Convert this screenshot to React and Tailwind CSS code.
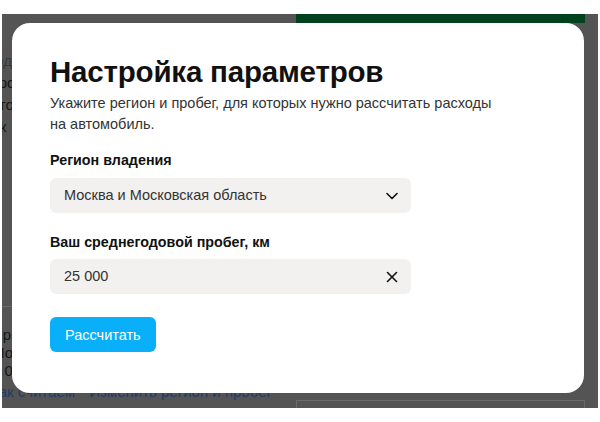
import React from "react";

export default function App() {
  return (
    <div className="relative w-[600px] h-[422px] bg-white overflow-hidden font-['Liberation_Sans',Arial,sans-serif]">
      {/* underlying page (dimmed) */}
      <div className="pt-[14px] pl-[2px] pr-[2px]">
        <div className="relative h-[394px] bg-[#545454] overflow-hidden flex">
          <div className="w-[294px] shrink-0 relative">
            <div className="absolute left-[-14px] top-[36px] text-[15px] leading-[22px] text-[#161616]">
              <div className="text-[#3a3a3a]">Год</div>
              <div>Про</div>
              <div>Ито</div>
              <div>Ок</div>
            </div>
            <div className="absolute left-0 right-0 top-[292px] h-px bg-[#6a6a6a]" />
            <div className="absolute left-[-10px] top-[312px] text-[15px] leading-[18px] text-[#161616]">
              <div>При</div>
              <div>Мо</div>
              <div>5 0</div>
            </div>
            <div className="absolute left-[-12px] top-[368px] text-[15px] leading-[20px] text-[#1f3d63] whitespace-nowrap">
              Как считаем <span className="ml-[10px]">Изменить регион и пробег</span>
            </div>
          </div>
          <div className="flex-1 flex flex-col pr-[13px]">
            <div className="h-[9px] bg-[#00411e]" />
            <div className="flex-1" />
            <div className="h-[8px] border border-[#6a6a6a] border-b-0" />
          </div>
        </div>
      </div>

      {/* modal */}
      <div className="absolute left-[12px] top-[23px] w-[572px] h-[370px] bg-white rounded-[18px] pl-[38px] pt-[31px]">
        <h1 className="text-[29.5px] leading-[36px] font-bold text-[#111] tracking-[-0.2px]">Настройка параметров</h1>
        <p className="mt-[3px] w-[455px] text-[14.5px] leading-[21px] text-[#333]">
          Укажите регион и пробег, для которых нужно рассчитать расходы на автомобиль.
        </p>
        <div className="mt-[15px] text-[14.3px] leading-[20px] font-bold text-[#111]">Регион владения</div>
        <div className="mt-[8px] w-[361px] h-[35px] rounded-[6px] bg-[#f2f1ef] flex items-center justify-between pl-[14px] pr-[12px]">
          <span className="text-[14.5px] text-[#333]">Москва и Московская область</span>
          <svg width="14" height="14" viewBox="0 0 14 14" fill="none" stroke="#111" strokeWidth="1.6" strokeLinecap="round" strokeLinejoin="round">
            <path d="M2 4.5 L7 9.5 L12 4.5" />
          </svg>
        </div>
        <div className="mt-[19px] text-[14.3px] leading-[20px] font-bold text-[#111]">Ваш среднегодовой пробег, км</div>
        <div className="mt-[7px] w-[361px] h-[35px] rounded-[6px] bg-[#f2f1ef] flex items-center justify-between pl-[14px] pr-[12px]">
          <span className="text-[14.5px] text-[#333]">25 000</span>
          <svg width="14" height="14" viewBox="0 0 14 14" fill="none" stroke="#111" strokeWidth="1.6" strokeLinecap="round">
            <path d="M2.5 2.5 L11.5 11.5 M11.5 2.5 L2.5 11.5" />
          </svg>
        </div>
        <button className="mt-[23px] h-[35px] px-[15px] rounded-[6px] bg-[#0aaffa] text-white text-[14.5px] leading-[20px]">
          Рассчитать
        </button>
      </div>
    </div>
  );
}
